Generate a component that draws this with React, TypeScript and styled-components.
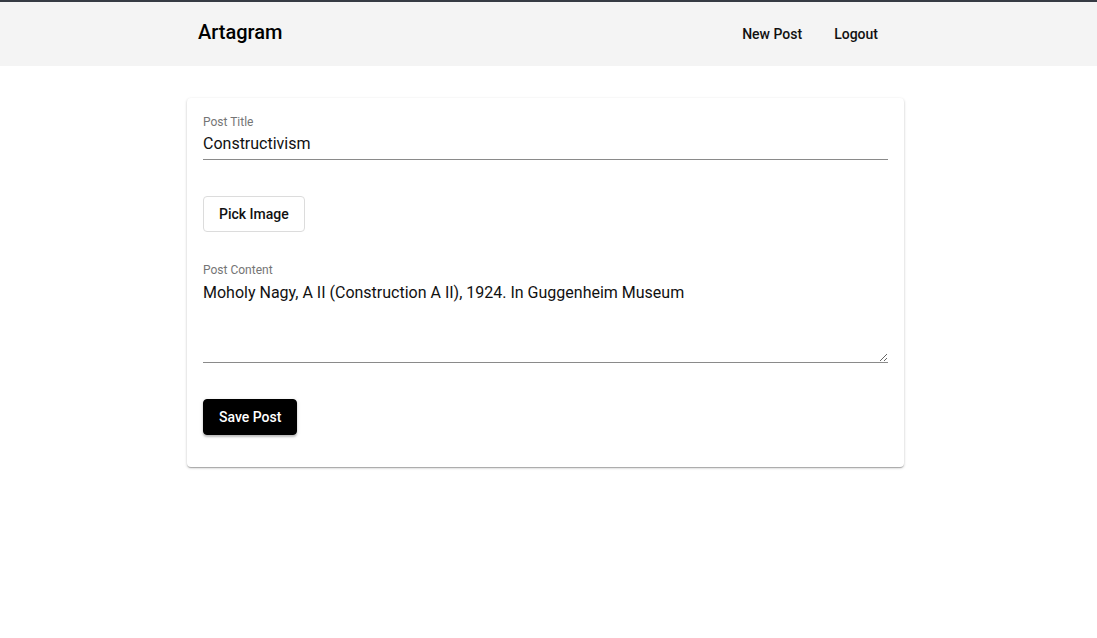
import React, { useState } from 'react';
import styled, { createGlobalStyle } from 'styled-components';

const GlobalStyle = createGlobalStyle`
  html, body {
    margin: 0;
    padding: 0;
    background: #fff;
    font-family: Roboto, "Liberation Sans", Arial, sans-serif;
    color: #111;
  }
  * {
    box-sizing: border-box;
  }
`;

const Page = styled.div`
  min-height: 638px;
  border-top: 2px solid #363b44;
`;

const Header = styled.header`
  background: #f4f4f4;
  height: 64px;
  padding-right: 6px;
`;

const HeaderInner = styled.div`
  max-width: 717px;
  height: 100%;
  margin: 0 auto;
  padding: 0 10px 0 11px;
  display: flex;
  align-items: center;
  justify-content: space-between;
`;

const Brand = styled.h1`
  margin: 0 0 4px;
  font-size: 20px;
  font-weight: 500;
  color: #000;
`;

const Nav = styled.nav`
  display: flex;
  align-items: center;
`;

const NavLink = styled.a`
  padding: 0 16px;
  font-size: 14px;
  font-weight: 500;
  color: #111;
  text-decoration: none;
  cursor: pointer;
`;

const Main = styled.main`
  padding: 32px 6px 0 0;
`;

const Card = styled.form`
  max-width: 717px;
  margin: 0 auto;
  padding: 16px 16px 32px;
  background: #fff;
  border-radius: 4px;
  box-shadow: 0 1px 3px rgba(0, 0, 0, 0.2), 0 1px 1px rgba(0, 0, 0, 0.14),
    0 2px 1px -1px rgba(0, 0, 0, 0.12);
`;

const Field = styled.label`
  display: block;
`;

const Label = styled.span`
  display: block;
  font-size: 12px;
  line-height: 16px;
  color: #757575;
`;

const Input = styled.input`
  display: block;
  width: 100%;
  margin: 0;
  padding: 4px 0 5px;
  border: none;
  border-bottom: 1px solid #8a8a8a;
  outline: none;
  background: transparent;
  font-family: inherit;
  font-size: 16px;
  line-height: 20px;
  color: #111;
`;

const TextArea = styled.textarea`
  display: block;
  width: 100%;
  height: 85px;
  margin: 0;
  padding: 5px 0 4px;
  border: none;
  border-bottom: 1px solid #8a8a8a;
  outline: none;
  background: transparent;
  font-family: inherit;
  font-size: 16px;
  line-height: 20px;
  color: #111;
`;

const Button = styled.button<{ primary?: boolean }>`
  display: inline-flex;
  align-items: center;
  height: 36px;
  padding: 0 15px;
  border-radius: 4px;
  font-family: inherit;
  font-size: 14px;
  font-weight: 500;
  cursor: pointer;
  border: 1px solid ${(p) => (p.primary ? '#000' : '#dcdcdc')};
  background: ${(p) => (p.primary ? '#000' : '#fff')};
  color: ${(p) => (p.primary ? '#fff' : '#111')};
  box-shadow: ${(p) =>
    p.primary
      ? '0 2px 2px rgba(0,0,0,0.2), 0 1px 4px rgba(0,0,0,0.12)'
      : 'none'};
`;

const ImageRow = styled.div`
  margin: 36px 0 30px;
`;

const SaveRow = styled.div`
  margin-top: 36px;
`;

export default function App() {
  const [title, setTitle] = useState('Constructivism');
  const [content, setContent] = useState(
    'Moholy Nagy, A II (Construction A II), 1924. In Guggenheim Museum'
  );

  return (
    <Page>
      <GlobalStyle />
      <Header>
        <HeaderInner>
          <Brand>Artagram</Brand>
          <Nav>
            <NavLink>New Post</NavLink>
            <NavLink>Logout</NavLink>
          </Nav>
        </HeaderInner>
      </Header>
      <Main>
        <Card onSubmit={(e) => e.preventDefault()}>
          <Field>
            <Label>Post Title</Label>
            <Input value={title} onChange={(e) => setTitle(e.target.value)} />
          </Field>
          <ImageRow>
            <Button type="button">Pick Image</Button>
          </ImageRow>
          <Field>
            <Label>Post Content</Label>
            <TextArea
              value={content}
              onChange={(e) => setContent(e.target.value)}
            />
          </Field>
          <SaveRow>
            <Button primary type="submit">
              Save Post
            </Button>
          </SaveRow>
        </Card>
      </Main>
    </Page>
  );
}
